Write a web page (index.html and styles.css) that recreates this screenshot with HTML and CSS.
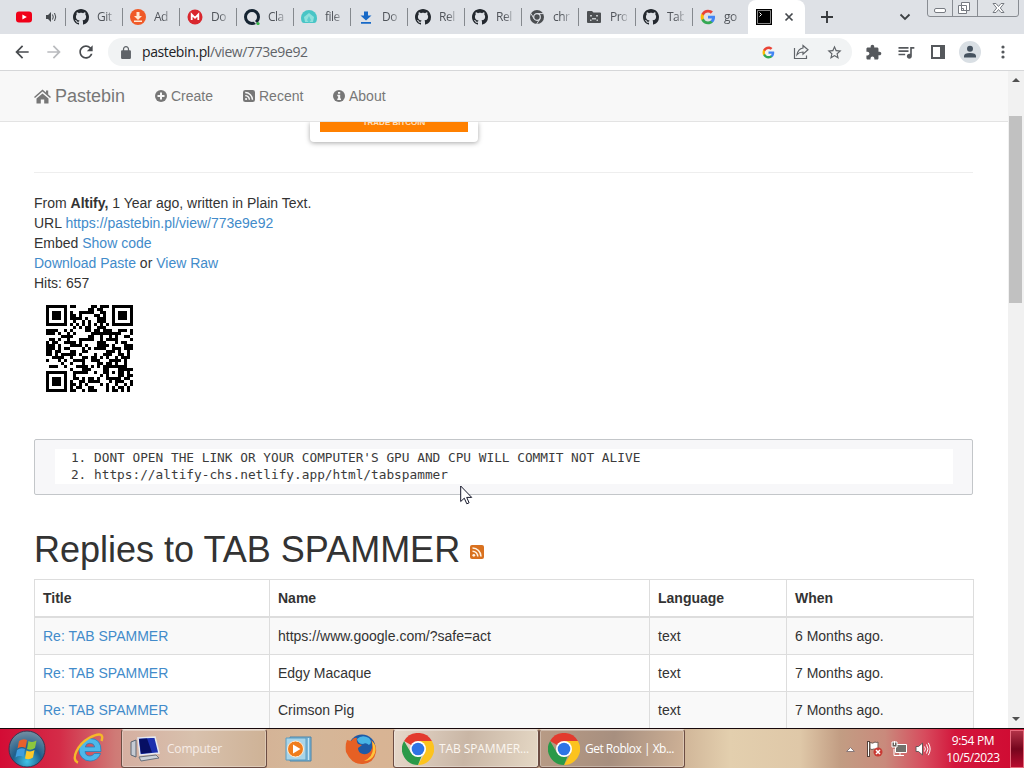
FILE: index.html
```html
<!DOCTYPE html>
<html lang="en">
<head>
<meta charset="utf-8">
<title>Pastebin</title>
<link rel="stylesheet" href="styles.css">
</head>
<body>
<svg class="defs" width="0" height="0">
  <symbol id="github" viewBox="0 0 16 16"><path d="M8 0C3.58 0 0 3.58 0 8c0 3.54 2.29 6.53 5.47 7.59.4.07.55-.17.55-.38 0-.19-.01-.82-.01-1.49-2.01.37-2.53-.49-2.69-.94-.09-.23-.48-.94-.82-1.13-.28-.15-.68-.52-.01-.53.63-.01 1.08.58 1.23.82.72 1.21 1.87.87 2.33.66.07-.52.28-.87.51-1.07-1.78-.2-3.64-.89-3.64-3.95 0-.87.31-1.59.82-2.15-.08-.2-.36-1.02.08-2.12 0 0 .67-.21 2.2.82.64-.18 1.32-.27 2-.27.68 0 1.36.09 2 .27 1.53-1.04 2.2-.82 2.2-.82.44 1.1.16 1.92.08 2.12.51.56.82 1.27.82 2.15 0 3.07-1.87 3.75-3.65 3.95.29.25.54.73.54 1.48 0 1.07-.01 1.93-.01 2.2 0 .21.15.46.55.38A8.013 8.013 0 0016 8c0-4.42-3.58-8-8-8z" fill="#24292f"/></symbol>
  <symbol id="google" viewBox="0 0 24 24"><path fill="#4285f4" d="M22.56 12.25c0-.78-.07-1.53-.2-2.25H12v4.26h5.92c-.26 1.37-1.04 2.53-2.21 3.31v2.77h3.57c2.08-1.92 3.28-4.74 3.28-8.09z"/><path fill="#34a853" d="M12 23c2.97 0 5.46-.98 7.28-2.66l-3.57-2.77c-.98.66-2.23 1.06-3.71 1.06-2.86 0-5.29-1.93-6.16-4.53H2.18v2.84C3.99 20.53 7.7 23 12 23z"/><path fill="#fbbc05" d="M5.84 14.09c-.22-.66-.35-1.36-.35-2.09s.13-1.43.35-2.09V7.07H2.18C1.43 8.55 1 10.22 1 12s.43 3.45 1.18 4.93l2.85-2.22.81-.62z"/><path fill="#ea4335" d="M12 5.38c1.62 0 3.06.56 4.21 1.64l3.15-3.15C17.45 2.09 14.97 1 12 1 7.7 1 3.99 3.47 2.18 7.07l3.66 2.84c.87-2.6 3.3-4.53 6.16-4.53z"/></symbol>
  <symbol id="chrome" viewBox="0 0 32 32"><path fill="#e33b2e" d="M16 16L2.1 8A16 16 0 0 1 29.9 8z"/><path fill="#fcc31e" d="M16 8h13.9A16 16 0 0 1 16 32l7-12z"/><path fill="#2a9948" d="M2.100 8l7 12L16 24l3.500-.8L16 32A16 16 0 0 1 2.100 8z"/><circle cx="16" cy="16" r="8" fill="#fff"/><circle cx="16" cy="16" r="6.3" fill="#2f74e5"/></symbol>
</svg>

<div class="tabstrip">
  <div class="tab first">
    <svg width="16" height="16"><rect y="2.5" width="16" height="11" rx="3" fill="#f00018"/><path d="M6.4 5.5v5L10.8 8z" fill="#fff"/></svg>
    <svg class="audio" width="12" height="12" viewBox="0 0 12 12"><path d="M1 4h2l3-3v10L3 8H1z" fill="#45494d"/><path d="M7.5 3.5q1.5 2.500 0 5M9.500 2q2.500 4 0 8" fill="none" stroke="#45494d"/></svg>
  </div>
  <div class="tab"><svg width="16" height="16"><use href="#github"/></svg><span>Git</span></div>
  <div class="tab"><svg width="16" height="16"><circle cx="8" cy="8" r="8" fill="#f05a28"/><path d="M6.500 3h3v4H12l-4 4-4-4h2.500zM4 11.500h8v1.500H4z" fill="#ffe9d5"/></svg><span>Ad</span></div>
  <div class="tab"><svg width="16" height="16"><circle cx="8" cy="8" r="7.500" fill="#d9272e"/><path d="M4.700 11V5.500L8 8.800l3.300-3.300V11" fill="none" stroke="#fff" stroke-width="1.800"/></svg><span>Do</span></div>
  <div class="tab"><svg width="16" height="16"><circle cx="8" cy="8" r="6.500" fill="none" stroke="#152432" stroke-width="3"/><path d="M8.500 10.500l4 4" stroke="#dee1e6" stroke-width="1.500"/><circle cx="14" cy="14.500" r="1.600" fill="#38b54a"/></svg><span>Cla</span></div>
  <div class="tab"><svg width="16" height="16"><path d="M0 9a8 8 0 0 1 16 0c0 3-1 5-3 5H3C1 14 0 12 0 9z" fill="#49c5c6"/><path d="M8 4l5 4-1 5H4L3 8z" fill="#8fe0dc"/><path d="M8 7l2 4-2 3-2-3z" fill="#5fcdce"/></svg><span>file</span></div>
  <div class="tab"><svg width="16" height="16"><path d="M6 2.500h4v4h3.500L8 11.500l-5.500-5H6zM3 13h10v1.700H3z" fill="#1769c7"/></svg><span>Do</span></div>
  <div class="tab"><svg width="16" height="16"><use href="#github"/></svg><span>Rel</span></div>
  <div class="tab"><svg width="16" height="16"><use href="#github"/></svg><span>Rel</span></div>
  <div class="tab"><svg width="16" height="16"><circle cx="8" cy="8" r="7" fill="#4b4e51"/><circle cx="8" cy="8" r="3.300" fill="none" stroke="#dee1e6" stroke-width="1.200"/><path d="M8 4.600h6.500M5 9.700L2 4.500M11 9.700L7.700 15" stroke="#dee1e6"/></svg><span>chr</span></div>
  <div class="tab"><svg width="16" height="16"><path d="M1 3q0-1 1-1h4l1.500 1.500H14q1 0 1 1V13q0 1-1 1H2q-1 0-1-1z" fill="#4d5053"/><path d="M4 6h2v1.500H4zM10 6h2v1.500h-2zM4 12v-1.500h2V9h4v1.500h2V12h-1.500v-1.500h-5V12z" fill="#c4c7ca"/></svg><span>Pro</span></div>
  <div class="tab"><svg width="16" height="16"><use href="#github"/></svg><span>Tab</span></div>
  <div class="tab last"><svg width="16" height="16"><use href="#google"/></svg><span>go</span></div>
  <div class="tab active">
    <svg width="16" height="16"><path d="M0 0h16v16H0z"/><path d="M1.500 1.500h13v13h-13z" fill="none" stroke="#888"/><path d="M3.500 3.500l2 2-2 2" fill="none" stroke="#fff"/></svg>
    <svg class="close" width="10" height="10"><path d="M1.500 1.500l7 7m0-7l-7 7" stroke="#45494d" stroke-width="1.700"/></svg>
  </div>
  <svg class="plus" width="14" height="14"><path d="M7 1v12M1 7h12" stroke="#36393c" stroke-width="1.900"/></svg>
  <svg class="chevron" width="12" height="8"><path d="M1.500 1.500L6 6l4.500-4.500" fill="none" stroke="#3c4043" stroke-width="1.800"/></svg>
  <svg class="winbtns" width="93" height="18"><path d="M.5 0v14q0 2.500 2.500 2.500h86q2.500 0 2.500-2.500V0M25.500 0v16M50.500 0v16" fill="#dfe2e6" stroke="#888c92"/><rect x="7.500" y="8.500" width="11" height="4" rx="1.500" fill="#fff" stroke="#777b82"/><path d="M34.500 2.500h8v8h-8zM31.500 5.500h8v8h-8z" fill="#fff" stroke="#777b82"/><path d="M34.500 8.500h2v2h-2z" fill="none" stroke="#777b82"/><path d="M66 3.500h3l2.500 3 2.500-3h3L73.300 8l3.700 4.500h-3l-2.500-3-2.500 3h-3L69.700 8z" fill="#fff" stroke="#777b82"/></svg>
</div>

<div class="toolbar">
  <svg width="20" height="20" viewBox="0 0 24 24"><path fill="#484b4f" d="M20 11H7.830l5.590-5.590L12 4l-8 8 8 8 1.410-1.410L7.830 13H20v-2z"/></svg>
  <svg class="fwd" width="20" height="20" viewBox="0 0 24 24"><path fill="#b9bbbe" d="M4 11h12.170l-5.590-5.590L12 4l8 8-8 8-1.410-1.410L16.170 13H4v-2z"/></svg>
  <svg width="20" height="20" viewBox="0 0 24 24"><path fill="#484b4f" d="M17.650 6.350C16.200 4.900 14.210 4 12 4c-4.420 0-7.990 3.580-7.990 8s3.570 8 7.990 8c3.730 0 6.840-2.550 7.730-6h-2.080c-.82 2.330-3.040 4-5.650 4-3.310 0-6-2.690-6-6s2.690-6 6-6c1.660 0 3.140.69 4.220 1.780L13 11h7V4l-2.350 2.350z"/></svg>
  <div class="omnibox">
    <svg width="12" height="13" viewBox="3 1 18 21"><path fill="#5f6368" fill-rule="evenodd" d="M18 8h-1V6c0-2.760-2.240-5-5-5S7 3.240 7 6v2H6c-1.100 0-2 .9-2 2v10c0 1.100.9 2 2 2h12c1.100 0 2-.9 2-2V10c0-1.100-.9-2-2-2zM9 6a3 3 0 016 0v2H9V6z"/></svg>
    <span class="url">pastebin.pl<i>/view/773e9e92</i></span>
    <svg width="13" height="13"><use href="#google"/></svg>
    <svg width="17" height="16" viewBox="0 0 17 16"><path d="M1.500 4v10.500h12V11.500M10 1.500l5 4.300-5 4.300V8q-3.700 0-6 2.700Q5 5 10 4z" fill="none" stroke="#5f6368" stroke-width="1.200"/></svg>
    <svg width="17" height="17" viewBox="0 0 24 24"><path fill="#5f6368" d="M22 9.240l-7.190-.62L12 2 9.190 8.630 2 9.240l5.460 4.730L5.820 21 12 17.270 18.180 21l-1.630-7.030L22 9.240zM12 15.400l-3.760 2.270 1-4.280-3.320-2.880 4.380-.38L12 6.100l1.710 4.040 4.380.38-3.320 2.880 1 4.280L12 15.400z"/></svg>
  </div>
  <div class="actions">
    <svg width="17" height="17" viewBox="0 0 24 24"><path fill="#55585c" d="M20.500 11H19V7c0-1.100-.9-2-2-2h-4V3.500C13 2.120 11.880 1 10.500 1S8 2.120 8 3.500V5H4c-1.100 0-1.990.9-1.990 2v3.800H3.500c1.490 0 2.700 1.210 2.700 2.700s-1.210 2.700-2.700 2.700H2V20c0 1.100.9 2 2 2h3.800v-1.500c0-1.490 1.210-2.700 2.700-2.700 1.490 0 2.700 1.210 2.700 2.700V22H17c1.100 0 2-.9 2-2v-4h1.500c1.380 0 2.500-1.120 2.500-2.500S21.880 11 20.500 11z"/></svg>
    <svg width="20" height="20" viewBox="0 0 24 24"><path fill="#55585c" d="M15 6H3v2h12V6zm0 4H3v2h12v-2zM3 16h8v-2H3v2zM17 6v8.180c-.31-.11-.65-.18-1-.18-1.660 0-3 1.340-3 3s1.340 3 3 3 3-1.340 3-3V8h3V6h-5z"/></svg>
    <svg width="14" height="14"><path d="M1 1h12v12H1z" fill="none" stroke="#55585c" stroke-width="2"/><path d="M9 1h4v12H9z" fill="#55585c"/></svg>
    <svg width="22" height="22"><circle cx="11" cy="11" r="11" fill="#d9dfe4"/><circle cx="11" cy="7.700" r="3" fill="#45525f"/><path d="M5 16.500v-1.500q0-3 6-3t6 3v1.500z" fill="#45525f"/></svg>
    <svg width="4" height="14" fill="#55585c"><circle cx="2" cy="2" r="1.600"/><circle cx="2" cy="7" r="1.600"/><circle cx="2" cy="12" r="1.600"/></svg>
  </div>
</div>

<div class="viewport">
  <div class="page">
    <nav class="navbar">
      <a class="brand"><svg width="17" height="15" viewBox="0 0 17 15"><path d="M8.500 4.500L14.500 9.500v5h-4.300v-4H6.800v4H2.500v-5zM8.500.5L12 3.500V1.500h2.200v3.900L17 8l-1 1-7.500-6.400L1 9 0 8z" fill="#777"/></svg>Pastebin</a>
      <a class="create"><svg width="12" height="12"><circle cx="6" cy="6" r="6" fill="#777"/><path d="M6 2.500v7M2.500 6h7" stroke="#f8f8f8" stroke-width="2"/></svg>Create</a>
      <a class="recent"><svg width="12" height="12"><rect width="12" height="12" rx="2.300" fill="#777"/><path d="M2.200 2.500a7.300 7.300 0 0 1 7.300 7.300M2.200 5.600a4.200 4.200 0 0 1 4.200 4.200" fill="none" stroke="#f8f8f8" stroke-width="1.400"/><circle cx="3.100" cy="9" r="1.100" fill="#f8f8f8"/></svg>Recent</a>
      <a class="about"><svg width="12" height="12"><circle cx="6" cy="6" r="6" fill="#777"/><path d="M5 2h2.200v1.800H5zM4.300 4.800h2.900v3.700H8V10H4.300V8.500h.8V6.200h-.8z" fill="#f8f8f8"/></svg>About</a>
    </nav>
    <main>
      <div class="adclip"><div class="ad"><div class="trade">TRADE BITCOIN</div></div></div>
      <div class="info">
        <div>From <b>Altify,</b> 1 Year ago, written in Plain Text.</div>
        <div>URL <a>https://pastebin.pl/view/773e9e92</a></div>
        <div>Embed <a>Show code</a></div>
        <div><a>Download Paste</a> or <a>View Raw</a></div>
        <div>Hits: 657</div>
      </div>
      <svg class="qr" id="qr" width="111" height="111" viewBox="-4 -4 37 37" shape-rendering="crispEdges"></svg>
      <div class="paste"><ol><li>DONT OPEN THE LINK OR YOUR COMPUTER'S GPU AND CPU WILL COMMIT NOT ALIVE</li><li>https://altify-chs.netlify.app/html/tabspammer</li></ol></div>
      <h1>Replies to TAB SPAMMER <svg width="14" height="14"><rect width="14" height="14" rx="2" fill="#d9711f"/><path d="M2.500 3a8.500 8.500 0 0 1 8.500 8.500M2.500 6.200a5.300 5.300 0 0 1 5.300 5.300" fill="none" stroke="#fff3e2" stroke-width="1.600"/><circle cx="3.800" cy="10.300" r="1.400" fill="#fff3e2"/></svg></h1>
      <table>
        <thead><tr><th class="c1">Title</th><th class="c2">Name</th><th class="c3">Language</th><th>When</th></tr></thead>
        <tbody>
          <tr><td><a>Re: TAB SPAMMER</a></td><td>https://www.google.com/?safe=act</td><td>text</td><td>6 Months ago.</td></tr>
          <tr><td><a>Re: TAB SPAMMER</a></td><td>Edgy Macaque</td><td>text</td><td>7 Months ago.</td></tr>
          <tr><td><a>Re: TAB SPAMMER</a></td><td>Crimson Pig</td><td>text</td><td>7 Months ago.</td></tr>
        </tbody>
      </table>
    </main>
  </div>
  <div class="scrollbar">
    <svg width="8" height="5"><path d="M0 5l4-4 4 4z" fill="#505050"/></svg>
    <div class="thumb"></div>
    <svg class="down" width="8" height="5"><path d="M0 0l4 4 4-4z" fill="#505050"/></svg>
  </div>
</div>

<div class="taskbar">
  <svg class="start" width="38" height="38" viewBox="0 0 38 38"><defs><radialGradient id="orb" cx=".5" cy=".85" r=".8"><stop offset="0" stop-color="#3fc3e8"/><stop offset=".5" stop-color="#1f5f8c"/><stop offset="1" stop-color="#6d8ba0"/></radialGradient></defs><circle cx="19" cy="19" r="18" fill="url(#orb)" stroke="#3b3550"/><path d="M11 11q4-3 8-1l-1.500 8q-4-2-8 .5z" fill="#e8602c"/><path d="M20.500 11q4 2 8-.5L27 18q-4 3-8 1z" fill="#8cc63e"/><path d="M9 20q4-3 8-1l-1.500 8q-4-2-8 .5z" fill="#3f9de0"/><path d="M18.500 20.500q4 2 8-.5L25 27.500q-4 3-8 1z" fill="#fdc82a"/></svg>
  <svg class="ie" width="32" height="32" viewBox="0 0 32 32"><path d="M17 5.500a11 11 0 0 0-11 11.500 11 11 0 0 0 11 11c5 0 9-3 10.500-7.500h-6.300q-1.500 2.500-4.200 2.500-4.500 0-5-4.500h16Q28.500 5.500 17 5.500zM12.200 14q.8-3.800 4.800-3.800t4.800 3.800z" fill="#4db8ea" stroke="#2382ba" stroke-width=".8"/><path d="M5 29.500C-3 27 5 11 16 5S31 1 28.500 8" fill="none" stroke="#f5b92a" stroke-width="2.400"/></svg>
  <div class="task computer"><svg width="32" height="28" viewBox="0 0 32 28"><path d="M1 7l5-2v17l-5-2z" fill="#c6cbd3" stroke="#5c6672"/><path d="M8 3l17-1 4 16-19 2z" fill="#1b2fae" stroke="#e5e9f0" stroke-width="1.500"/><path d="M9 4l8-.5 5 14-11 1z" fill="#070f63"/><path d="M9 22l17-2 3 3-18 3z" fill="#cdd2d9" stroke="#69727e"/></svg><span>Computer</span></div>
  <svg class="wmp" width="28" height="28" viewBox="0 0 28 28"><path d="M5 2h21v24H5z" fill="#7db7d8" stroke="#4a83a8"/><path d="M1 3h20v22H1z" fill="#a9d5e9" stroke="#5a9cc0"/><path d="M23.500 3v22" stroke="#c8e6f4"/><circle cx="10.500" cy="14" r="8" fill="#f07d1c" stroke="#fff0dc"/><path d="M8 9.500v9l7.500-4.500z" fill="#fff"/></svg>
  <svg class="ff" width="32" height="32" viewBox="0 0 32 32"><circle cx="17" cy="15" r="13.500" fill="#1d5aa6"/><path d="M12 6q5-5 12-1 4 4 0 7-3-3-6-1-5 0-6-5z" fill="#48b4e5"/><path d="M2 7l4 1q3-4 6-3-1 3 1 6l4 1-4 3q0 5 5 6 7 1 9-6 1-4-1-8 6 5 5 12-2 11-13 12T1 19Q0 12 2 7z" fill="#e66024"/><path d="M27 8q5 5 3 12-3 8-11 8 9-4 9-13z" fill="#ffc33c"/></svg>
  <div class="task current"><svg width="32" height="32"><use href="#chrome"/></svg><span>TAB SPAMMER...</span></div>
  <div class="task roblox"><svg width="32" height="32"><use href="#chrome"/></svg><span>Get Roblox | Xb...</span></div>
  <div class="tray">
    <svg width="9" height="6"><path d="M.5 5.500l4-4 4 4z" fill="#fff" stroke="#8b7b7b"/></svg>
    <svg class="flag" width="16" height="16"><path d="M1.500 0v16" stroke="#554039" stroke-width="3"/><path d="M1.500 1v14" stroke="#fff"/><path d="M3 1.500q3 1.500 5-.5 2 1 3 0v7q-2 1-4 0-2 1-4 0z" fill="#fff" stroke="#6e5c55"/><circle cx="11" cy="11" r="4.500" fill="#c93a34"/><path d="M9 9l4 4m0-4l-4 4" stroke="#fff" stroke-width="1.500"/></svg>
    <svg width="16" height="16"><path d="M4.500 3.500h11v8h-11z" fill="#73706b" stroke="#fff"/><path d="M3 8v6.500h10M9 12v2" fill="none" stroke="#fff"/><path d="M1 1h5v5H1z" fill="#67605a" stroke="#fff"/><path d="M3.500 0v4" stroke="#fff"/></svg>
    <svg width="16" height="16"><path d="M1 5.500h2.500L7.500 2v12L3.500 10.500H1z" fill="#fff" stroke="#65595a"/><path d="M9.500 5.500q1.800 2.500 0 5M11.500 3.500q3 4.500 0 9M13.300 1.800q3.700 6.200 0 12.400" fill="none" stroke="#fff"/></svg>
  </div>
  <div class="clock"><div>9:54 PM</div><div>10/5/2023</div></div>
  <div class="showdesk"></div>
</div>
<svg class="cursor" width="13" height="20" viewBox="0 0 13 20"><path d="M.7 1v15.500l3.600-3.300 2.500 5.600 2.300-1-2.400-5.400h5z" fill="#fff" stroke="#15172a"/></svg>
<script src="qr.js"></script>
</body>
</html>
```
FILE: styles.css
```css
* { box-sizing: border-box; }
body { margin: 0; width: 1024px; height: 768px; overflow: hidden; display: flex; flex-direction: column; background: #fff; font-family: "Liberation Sans", Arial, sans-serif; font-size: 14px; line-height: 20px; color: #333; }
svg { display: block; flex: none; }
.defs { position: absolute; }
a { color: #428bca; text-decoration: none; }

.tabstrip { height: 34px; flex: none; display: flex; align-items: center; background: #dee1e6; padding-left: 8px; font: 12px/16px "Open Sans", sans-serif; color: #50545a; }
.tab { width: 57px; height: 18px; padding-left: 7px; display: flex; align-items: center; border-right: 1px solid #85898e; flex: none; }
.tab.first { width: 58px; padding-left: 8px; }
.tab.last { border-right: 0; width: 55px; }
.tab span { margin-left: 8px; width: 17px; white-space: nowrap; letter-spacing: -.5px; mask-image: linear-gradient(90deg, #000 50%, rgba(0,0,0,.25)); }
.audio { margin-left: 13px; }
.tab.active { width: 57px; height: 34px; border: 0; background: #fff; border-radius: 8px 8px 0 0; padding-left: 8px; }
.close { margin-left: 12px; }
.plus { margin-left: 15px; }
.chevron { margin-left: 65px; }
.winbtns { margin-left: 16px; align-self: flex-start; }

.toolbar { height: 37px; flex: none; display: flex; align-items: center; padding-left: 12px; background: #fff; border-bottom: 1px solid #d6d7d9; }
.fwd { margin: 0 12px; }
.omnibox { margin-left: 12px; width: 744px; height: 28px; border-radius: 14px; background: #f1f3f4; display: flex; align-items: center; gap: 16px; padding: 0 9px 0 12px; }
.omnibox svg:nth-last-child(2) { margin-left: 2px; }
.url { flex: 1; margin-left: -6px; font: 14px/20px "Open Sans", sans-serif; letter-spacing: -.4px; color: #202124; }
.url i { font-style: normal; color: #5f6368; }
.actions { flex: 1; display: flex; align-items: center; padding-left: 13px; }
.actions svg:nth-child(2) { margin-left: 14px; }
.actions svg:nth-child(3) { margin-left: 15px; }
.actions svg:nth-child(4) { margin-left: 14px; }
.actions svg:nth-child(5) { margin-left: 20px; }

.viewport { flex: 1; min-height: 0; display: flex; overflow: hidden; }
.page { width: 1008px; height: 657px; overflow: hidden; }
.navbar { height: 51px; display: flex; align-items: center; padding-left: 34px; background: #f8f8f8; border-bottom: 1px solid #e3e3e3; }
.navbar a { display: flex; align-items: center; color: #777; gap: 4px; }
.navbar .brand { width: 121px; font-size: 18px; gap: 4px; }
.create { width: 88px; }
.recent { width: 90px; }
main { padding: 0 35px 0 34px; }
.adclip { height: 51px; overflow: hidden; border-bottom: 1px solid #eee; padding-left: 276px; margin-bottom: 20px; }
.ad { width: 168px; height: 20px; padding: 0 10px 10px; background: #fff; border-radius: 0 0 4px 4px; box-shadow: 0 1px 5px rgba(0,0,0,.35); }
.trade { height: 10px; background: #ff8000; color: #ffe2c0; font: bold 8px/0 "Liberation Sans", sans-serif; padding-top: 1px; text-align: center; overflow: hidden; }
.qr { margin-bottom: 35px; }
.paste { height: 56px; padding: 9px 19px 9px 20px; border: 1px solid #c3c6c9; border-radius: 2px; background: #f7f7f9; }
ol { margin: 0; padding: 0 0 0 39px; background: #fff; height: 35px; font: 12.790px/17px "DejaVu Sans Mono", monospace; color: #3b3b3b; list-style-position: outside; }
h1 { height: 44px; margin: 33px 0 7px; display: flex; align-items: center; gap: 10px; font-size: 36px; line-height: 40px; font-weight: 400; }
h1 svg { margin-top: 3px; }
table { width: 940px; table-layout: fixed; border-collapse: collapse; }
th, td { border: 1px solid #ddd; padding: 8px; height: 37px; text-align: left; white-space: nowrap; line-height: 20px; }
th { border-bottom-width: 2px; }
.c1 { width: 235px; } .c2 { width: 380px; } .c3 { width: 137px; }
tbody tr:nth-child(odd) { background: #f9f9f9; }

.scrollbar { width: 16px; background: #f1f1f1; display: flex; flex-direction: column; align-items: center; padding: 6px 1px 6px 0; }
.thumb { width: 13px; height: 187px; margin-top: 34px; background: #c1c1c1; }
.down { margin-top: auto; }

.taskbar { height: 40px; flex: none; display: flex; align-items: center; border-top: 1px solid #17090c; padding-left: 8px; font: 12px/16px "Open Sans", sans-serif; color: #fff; background: linear-gradient(90deg, #d30c35 0, #d42c48 60px, #cf7a76 115px, #d3ab91 190px, #d5b799 300px, #d8b494 380px, #cfb497 680px, #e3cfae 730px, #dfc8a8 800px, #c29d83 840px, #c98a7c 885px, #d74b5d 925px, #d3163c 955px, #cf0a31 1024px); }
.ie { margin-left: 27px; }
.task { height: 39px; width: 146px; display: flex; align-items: center; gap: 5px; padding-left: 8px; border: 1px solid #6c4d43; border-top-color: #eadbd0; border-radius: 3px; background: linear-gradient(90deg, #d5afa1, #d8c1ad 50%, #ceb296); white-space: nowrap; box-shadow: inset 0 0 0 1px rgba(255,255,255,.3); flex: none; letter-spacing: -.2px; }
.computer { margin-left: 16px; color: #f6ece6; }
.wmp { margin-left: 18px; }
.ff { margin-left: 32px; }
.current { margin-left: 16px; color: #fbf6f0; background: linear-gradient(100deg, #e6d8ca, #c9b6a5 50%, #e5d8c5); letter-spacing: -.1px; }
.roblox { background: linear-gradient(100deg, #b89b85, #a78f7f 50%, #cfb297); letter-spacing: -.5px; }
.tray { margin-left: 161px; display: flex; align-items: center; gap: 8px; }
.flag { margin-left: 4px; }
.clock { margin-left: 14px; width: 56px; text-align: center; line-height: 17px; letter-spacing: -.35px; white-space: nowrap; }
.showdesk { margin-left: auto; width: 14px; height: 38px; border: 1px solid #e76a7c; background: linear-gradient(#b23247, #75051d 50%, #b70a2e); }
.cursor { position: absolute; left: 460px; top: 485px; }
```
FILE: qr.js
```js
// Version 3 QR code, error correction level L.
const SIZE = 29, DATA_LEN = 55, EC_LEN = 15;

function encode(text, mask) {
  let bits = "0100" + text.length.toString(2).padStart(8, "0");
  for (const c of text) bits += c.charCodeAt(0).toString(2).padStart(8, "0");
  bits += "0000";
  const data = bits.match(/.{8}/g).map(b => parseInt(b, 2));
  for (let p = 0xec; data.length < DATA_LEN; p ^= 0xec ^ 0x11) data.push(p);
  const mul = (x, y) => { let z = 0; for (let i = 7; i >= 0; i--) { z = (z << 1) ^ ((z >>> 7) * 0x11d); z ^= ((y >>> i) & 1) * x; } return z; };
  const div = Array(EC_LEN).fill(0); div[EC_LEN - 1] = 1;
  let root = 1;
  for (let i = 0; i < EC_LEN; i++) {
    for (let j = 0; j < EC_LEN; j++) { div[j] = mul(div[j], root); if (j + 1 < EC_LEN) div[j] ^= div[j + 1]; }
    root = mul(root, 2);
  }
  const rem = Array(EC_LEN).fill(0);
  for (const b of data) { const f = b ^ rem.shift(); rem.push(0); div.forEach((c, i) => rem[i] ^= mul(c, f)); }
  const all = data.concat(rem);
  const m = Array.from({ length: SIZE }, () => Array(SIZE).fill(0));
  const fn = Array.from({ length: SIZE }, () => Array(SIZE).fill(false));
  const set = (x, y, v) => { if (x >= 0 && y >= 0 && x < SIZE && y < SIZE) { m[y][x] = v ? 1 : 0; fn[y][x] = true; } };
  for (let i = 0; i < SIZE; i++) { set(6, i, i % 2 === 0); set(i, 6, i % 2 === 0); }
  for (const [cx, cy] of [[3, 3], [SIZE - 4, 3], [3, SIZE - 4]])
    for (let dy = -4; dy <= 4; dy++) for (let dx = -4; dx <= 4; dx++) { const d = Math.max(Math.abs(dx), Math.abs(dy)); set(cx + dx, cy + dy, d !== 2 && d !== 4); }
  for (let dy = -2; dy <= 2; dy++) for (let dx = -2; dx <= 2; dx++) set(22 + dx, 22 + dy, Math.max(Math.abs(dx), Math.abs(dy)) !== 1);
  const f = 8 | mask; let r = f;
  for (let i = 0; i < 10; i++) r = (r << 1) ^ ((r >>> 9) * 0x537);
  const fb = (f << 10 | r) ^ 0x5412, bit = i => (fb >>> i) & 1;
  for (let i = 0; i < 6; i++) set(8, i, bit(i));
  set(8, 7, bit(6)); set(8, 8, bit(7)); set(7, 8, bit(8));
  for (let i = 9; i < 15; i++) set(14 - i, 8, bit(i));
  for (let i = 0; i < 8; i++) set(SIZE - 1 - i, 8, bit(i));
  for (let i = 8; i < 15; i++) set(8, SIZE - 15 + i, bit(i));
  set(8, SIZE - 8, 1);
  let k = 0;
  for (let right = SIZE - 1; right >= 1; right -= 2) {
    if (right === 6) right = 5;
    for (let v = 0; v < SIZE; v++) for (let j = 0; j < 2; j++) {
      const x = right - j, y = ((right + 1) & 2) === 0 ? SIZE - 1 - v : v;
      if (!fn[y][x]) { if (k < 560) m[y][x] = (all[k >>> 3] >>> (7 - (k & 7))) & 1; k++; }
    }
  }
  const masks = [(x, y) => (x + y) % 2, (x, y) => y % 2, x => x % 3, (x, y) => (x + y) % 3,
    (x, y) => (Math.floor(x / 3) + Math.floor(y / 2)) % 2, (x, y) => x * y % 2 + x * y % 3,
    (x, y) => (x * y % 2 + x * y % 3) % 2, (x, y) => ((x + y) % 2 + x * y % 3) % 2];
  for (let y = 0; y < SIZE; y++) for (let x = 0; x < SIZE; x++) if (!fn[y][x] && masks[mask](x, y) === 0) m[y][x] ^= 1;
  return m;
}

// Standard penalty score: runs, 2x2 blocks, finder-like patterns, dark balance.
function penalty(m) {
  let score = 0;
  const lines = m.map(r => r.join("")).concat(m.map((_, i) => m.map(r => r[i]).join("")));
  for (const s of lines) {
    for (const run of s.match(/0+|1+/g)) if (run.length >= 5) score += run.length - 2;
    const padded = "0000" + s + "0000";
    for (let i = 0; i + 11 <= padded.length; i++) {
      const w = padded.substr(i, 11);
      if (w === "10111010000" || w === "00001011101") score += 40;
    }
  }
  for (let y = 0; y < SIZE - 1; y++) for (let x = 0; x < SIZE - 1; x++) {
    const t = m[y][x] + m[y][x + 1] + m[y + 1][x] + m[y + 1][x + 1];
    if (t === 0 || t === 4) score += 3;
  }
  const dark = m.flat().reduce((a, b) => a + b);
  return score + Math.floor(Math.abs(dark * 100 / (SIZE * SIZE) - 50) / 5) * 10;
}

const codes = [0, 1, 2, 3, 4, 5, 6, 7].map(k => encode("https://pastebin.pl/view/773e9e92", k));
codes.sort((a, b) => penalty(a) - penalty(b));
let d = "";
codes[0].forEach((row, y) => row.forEach((v, x) => { if (v) d += `M${x} ${y}h1v1h-1z`; }));
document.getElementById("qr").innerHTML = `<path d="${d}"/>`;
```
